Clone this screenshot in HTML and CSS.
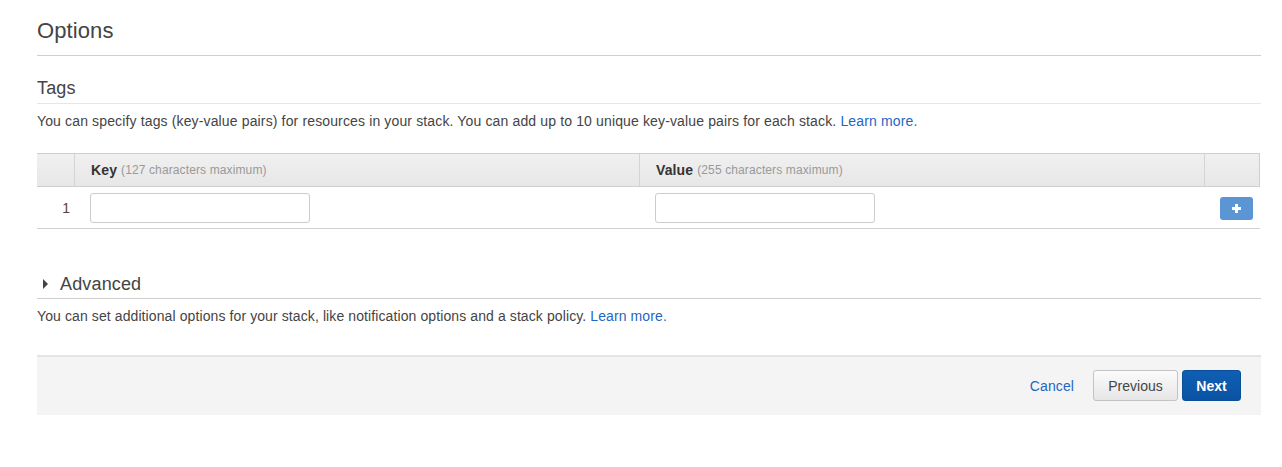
FILE: index.html
```html
<!DOCTYPE html>
<html>
<head>
<meta charset="utf-8">
<link rel="stylesheet" href="styles.css">
</head>
<body>
<div class="page">
  <h1 class="title">Options</h1>

  <h2 class="section-title">Tags</h2>
  <p class="desc">You can specify tags (key-value pairs) for resources in your stack. You can add up to 10 unique key-value pairs for each stack. <a href="#" class="link">Learn more.</a></p>

  <div class="tags-table">
    <div class="trow thead">
      <div class="cell c-idx"></div>
      <div class="cell c-key"><b>Key</b> <span class="hint">(127 characters maximum)</span></div>
      <div class="cell c-val"><b>Value</b> <span class="hint">(255 characters maximum)</span></div>
      <div class="cell c-act"></div>
    </div>
    <div class="trow tbody">
      <div class="cell c-idx num">1</div>
      <div class="cell c-key"><input class="text-input" type="text"></div>
      <div class="cell c-val"><input class="text-input" type="text"></div>
      <div class="cell c-act">
        <button class="add-btn" type="button" aria-label="Add">
          <svg width="9" height="9" viewBox="0 0 9 9"><path d="M3 0h3v3h3v3H6v3H3V6H0V3h3z" fill="#fff"/></svg>
        </button>
      </div>
    </div>
  </div>

  <h2 class="section-title advanced"><span class="caret"></span>Advanced</h2>
  <p class="desc desc-adv">You can set additional options for your stack, like notification options and a stack policy. <a href="#" class="link">Learn more.</a></p>

  <div class="footer">
    <a href="#" class="cancel">Cancel</a>
    <button class="btn btn-default" type="button">Previous</button>
    <button class="btn btn-primary" type="button">Next</button>
  </div>
</div>
</body>
</html>
```

FILE: styles.css
```css
* { box-sizing: border-box; }
html, body { margin: 0; padding: 0; background: #fff; }
body {
  font-family: "Liberation Sans", Arial, sans-serif;
  color: #444;
  font-size: 14px;
}
.page {
  margin-left: 37px;
  width: 1224px;
}
.title {
  margin: 0;
  padding: 18px 0 11px;
  font-size: 22px;
  line-height: 26px;
  font-weight: normal;
  color: #444;
  letter-spacing: 0.1px;
  border-bottom: 1px solid #cfcfcf;
}
.section-title {
  margin: 21px 0 0;
  padding-bottom: 4px;
  font-size: 18px;
  line-height: 22px;
  font-weight: normal;
  color: #444;
  letter-spacing: 0.15px;
  border-bottom: 1px solid #e6e6e6;
}
.desc {
  margin: 8px 0 0;
  font-size: 14px;
  line-height: 18px;
  letter-spacing: 0.14px;
}
.desc-adv { letter-spacing: 0.1px; }
.link { color: #1f66c2; text-decoration: none; }

.tags-table {
  margin-top: 23px;
  width: 1223px;
}
.trow { display: flex; }
.thead {
  height: 34px;
  background: linear-gradient(#f0f0f0, #e7e7e7);
  border-top: 1px solid #cfcfcf;
  border-bottom: 1px solid #cfcfcf;
  border-right: 1px solid #cfcfcf;
}
.thead .cell {
  display: flex;
  align-items: center;
  padding-left: 16px;
  border-right: 1px solid #d4d4d4;
  font-size: 14px;
  letter-spacing: 0.12px;
}
.thead .cell:last-child { border-right: none; }
.thead b { color: #333; font-weight: bold; margin-right: 4px; }
.hint { color: #999; font-size: 12px; }
.c-idx { width: 38px; flex: none; }
.c-key { width: 565px; flex: none; }
.c-val { width: 565px; flex: none; }
.c-act { flex: 1; }
.tbody {
  height: 42px;
  border-bottom: 1px solid #d0d0d0;
  align-items: center;
}
.tbody .cell { padding-left: 15px; display: flex; align-items: center; }
.tbody .num { justify-content: flex-end; padding-left: 0; padding-right: 5px; padding-top: 1px; color: #5a4030; }
.text-input {
  width: 220px;
  height: 30px;
  border: 1px solid #cccccc;
  border-radius: 3px;
  background: #fff;
  margin: 0;
  padding: 0 8px;
  font: 14px "Liberation Sans", Arial, sans-serif;
}
.add-btn {
  width: 33px;
  height: 23px;
  margin-top: 1px;
  padding: 0;
  border: none;
  border-radius: 3px;
  background: #5b95d3;
  display: flex;
  align-items: center;
  justify-content: center;
}
.add-btn svg { display: block; }

.advanced {
  margin-top: 44px;
  padding-bottom: 3px;
  border-bottom-color: #cfcfcf;
  display: flex;
  align-items: center;
  padding-left: 6px;
}
.caret {
  width: 0;
  height: 0;
  border-top: 5px solid transparent;
  border-bottom: 5px solid transparent;
  border-left: 5px solid #444;
  margin-right: 12px;
}

.footer {
  margin-top: 30px;
  height: 60px;
  background: #f4f4f4;
  border-top: 2px solid #e4e4e4;
  display: flex;
  align-items: center;
  justify-content: flex-end;
  padding: 0 20px 1px 0;
}
.cancel {
  color: #1f66c2;
  text-decoration: none;
  font-size: 14px;
  letter-spacing: 0.1px;
  margin-right: 19px;
}
.btn {
  height: 31px;
  border-radius: 3px;
  font: 14px "Liberation Sans", Arial, sans-serif;
  padding: 0;
  cursor: pointer;
}
.btn-default {
  width: 85px;
  color: #444;
  border: 1px solid #c3c3c3;
  background: linear-gradient(#fbfbfb, #e6e6e6);
  margin-right: 4px;
}
.btn-primary {
  width: 59px;
  color: #fff;
  font-weight: bold;
  border: 1px solid #0c4f96;
  background: linear-gradient(#0e5fb3, #0a53a3);
}
```
